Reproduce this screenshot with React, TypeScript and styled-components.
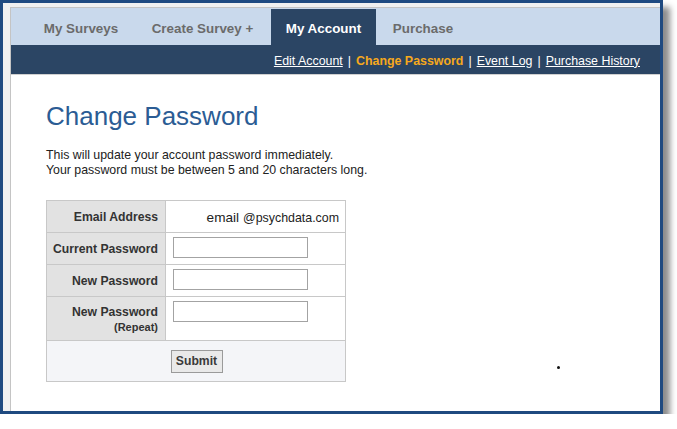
import React from "react";
import styled, { createGlobalStyle } from "styled-components";

const Global = createGlobalStyle`
  html, body { margin: 0; padding: 0; background: #ffffff; }
  body { font-family: "Liberation Sans", Arial, sans-serif; }
  * { box-sizing: border-box; }
`;

const Frame = styled.div`
  width: 663px;
  height: 414px;
  border: 3px solid #1f4a80;
  background: #f0f0f0;
  padding: 4px 0 0 7px;
  display: flex;
  box-shadow: 7px 7px 6px rgba(0, 0, 0, 0.45);
`;

const Panel = styled.div`
  flex: 1;
  background: #ffffff;
  border-top: 1px solid #c4c4c4;
  border-left: 1px solid #c4c4c4;
  display: flex;
  flex-direction: column;
`;

const Nav = styled.nav`
  height: 37px;
  background: #c9d9ec;
  padding: 1px 0 0 17px;
  display: flex;
  align-items: stretch;
`;

const Tab = styled.div<{ $active?: boolean; $w: number }>`
  width: ${(p) => p.$w}px;
  display: flex;
  align-items: center;
  justify-content: center;
  padding-top: 3px;
  font-size: 13.4px;
  font-weight: bold;
  white-space: nowrap;
  color: ${(p) => (p.$active ? "#ffffff" : "#6b6b6b")};
  background: ${(p) => (p.$active ? "#2b4564" : "transparent")};
`;

const SubNav = styled.div`
  height: 30px;
  background: #2b4564;
  border-bottom: 1px solid #d0d0d0;
  display: flex;
  align-items: center;
  justify-content: flex-end;
  padding: 2px 20px 0 0;
  font-size: 12.4px;
`;

const SubLink = styled.a<{ $current?: boolean }>`
  color: ${(p) => (p.$current ? "#f6a91c" : "#ffffff")};
  font-weight: ${(p) => (p.$current ? "bold" : "normal")};
  text-decoration: ${(p) => (p.$current ? "none" : "underline")};
  cursor: pointer;
`;

const Sep = styled.span`
  color: #ffffff;
  padding: 0 5px;
`;

const Content = styled.div`
  position: relative;
  flex: 1;
  padding: 26px 35px 0;
`;

const Title = styled.h1`
  margin: 0 0 17px;
  font-size: 26px;
  line-height: 30px;
  font-weight: normal;
  color: #2b5c94;
`;

const Intro = styled.p`
  margin: 0 0 23px;
  font-size: 12.35px;
  line-height: 14.5px;
  color: #222222;
`;

const Form = styled.div`
  width: 300px;
  display: grid;
  grid-template-columns: 119px 180px;
  border-top: 1px solid #c8c8c8;
  border-left: 1px solid #c8c8c8;
`;

const Label = styled.div<{ $h: number }>`
  height: ${(p) => p.$h}px;
  background: #e2e2e2;
  border-right: 1px solid #c8c8c8;
  border-bottom: 1px solid #c8c8c8;
  padding: 2px 7px 0 0;
  display: flex;
  flex-direction: column;
  justify-content: center;
  align-items: flex-end;
  text-align: right;
  font-size: 12.2px;
  line-height: 15px;
  font-weight: bold;
  color: #333333;
`;

const Small = styled.span`
  font-size: 11px;
  line-height: 14px;
`;

const Value = styled.div<{ $top?: boolean }>`
  background: #ffffff;
  border-right: 1px solid #c8c8c8;
  border-bottom: 1px solid #c8c8c8;
  padding: 4px 6px 0 7px;
  display: flex;
  align-items: ${(p) => (p.$top ? "flex-start" : "center")};
  justify-content: flex-start;
`;

const EmailValue = styled(Value)`
  padding: 2px 6px 0 7px;
  justify-content: flex-end;
  font-size: 12.4px;
  color: #222222;
`;

const EmailName = styled.span`
  font-size: 13.6px;
  margin-right: 4px;
`;

const Input = styled.input`
  width: 135px;
  height: 21px;
  border: 1px solid #a3a3a3;
  background: #ffffff;
  padding: 0 3px;
  margin: 0;
  font-family: inherit;
  font-size: 12px;
`;

const SubmitRow = styled.div`
  grid-column: 1 / 3;
  height: 41px;
  background: #f4f5f8;
  border-right: 1px solid #c8c8c8;
  border-bottom: 1px solid #c8c8c8;
  display: flex;
  align-items: center;
  justify-content: center;
  padding-left: 1px;
`;

const Button = styled.button`
  width: 52px;
  height: 23px;
  padding: 0;
  background: #e9e9e9;
  border: 1px solid #9a9a9a;
  font-family: "Liberation Sans", Arial, sans-serif;
  font-size: 12.2px;
  font-weight: bold;
  color: #3a3a3a;
`;

const Dot = styled.span`
  position: absolute;
  left: 546px;
  top: 291px;
  width: 3px;
  height: 3px;
  border-radius: 50%;
  background: #111111;
`;

const tabs = [
  { label: "My Surveys", w: 106 },
  { label: "Create Survey +", w: 137 },
  { label: "My Account", w: 105 },
  { label: "Purchase", w: 94 },
];

const links = ["Edit Account", "Change Password", "Event Log", "Purchase History"];

export default function App() {
  return (
    <>
      <Global />
      <Frame>
        <Panel>
          <Nav>
            {tabs.map((t) => (
              <Tab key={t.label} $w={t.w} $active={t.label === "My Account"}>
                {t.label}
              </Tab>
            ))}
          </Nav>
          <SubNav>
            {links.map((l, i) => (
              <React.Fragment key={l}>
                {i > 0 && <Sep>|</Sep>}
                <SubLink $current={l === "Change Password"}>{l}</SubLink>
              </React.Fragment>
            ))}
          </SubNav>
          <Content>
            <Title>Change Password</Title>
            <Intro>
              This will update your account password immediately.
              <br />
              Your password must be between 5 and 20 characters long.
            </Intro>
            <Form>
              <Label $h={32}>Email Address</Label>
              <EmailValue>
                <EmailName>email</EmailName>@psychdata.com
              </EmailValue>
              <Label $h={32}>Current Password</Label>
              <Value $top>
                <Input type="password" />
              </Value>
              <Label $h={32}>New Password</Label>
              <Value $top>
                <Input type="password" />
              </Value>
              <Label $h={44}>
                New Password
                <Small>(Repeat)</Small>
              </Label>
              <Value $top>
                <Input type="password" />
              </Value>
              <SubmitRow>
                <Button type="button">Submit</Button>
              </SubmitRow>
            </Form>
            <Dot />
          </Content>
        </Panel>
      </Frame>
    </>
  );
}
